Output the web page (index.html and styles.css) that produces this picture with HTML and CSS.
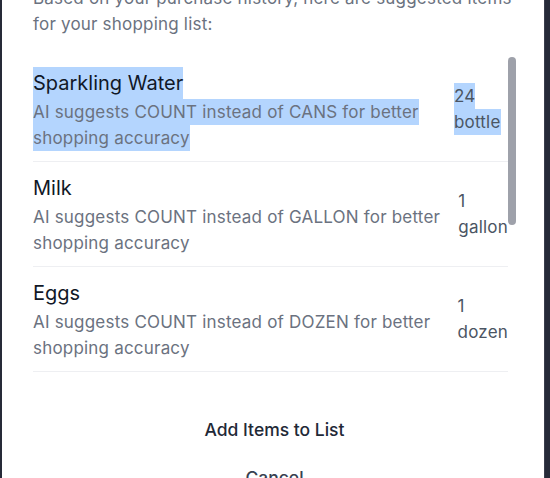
FILE: index.html
```html
<!DOCTYPE html>
<html lang="en">
<head>
<meta charset="utf-8">
<title>Suggested Items</title>
<link rel="stylesheet" href="styles.css">
</head>
<body>
<div class="modal">
  <p class="intro">Based on your purchase history, here are suggested items for your shopping list:</p>
  <div class="list-wrap">
    <div class="list">
      <div class="item">
        <div class="item-text">
          <div class="title"><span class="sel sel-title">Sparkling Water</span></div>
          <div class="desc"><span class="sel">AI suggests COUNT instead of CANS for better shopping accuracy</span></div>
        </div>
        <div class="qty"><span class="sel">24 bottle</span></div>
      </div>
      <div class="item">
        <div class="item-text">
          <div class="title">Milk</div>
          <div class="desc">AI suggests COUNT instead of GALLON for better shopping accuracy</div>
        </div>
        <div class="qty">1 gallon</div>
      </div>
      <div class="item">
        <div class="item-text">
          <div class="title">Eggs</div>
          <div class="desc">AI suggests COUNT instead of DOZEN for better shopping accuracy</div>
        </div>
        <div class="qty">1 dozen</div>
      </div>
      <div class="item">
        <div class="item-text">
          <div class="title">Bread</div>
          <div class="desc">AI suggests COUNT instead of LOAF for better shopping accuracy</div>
        </div>
        <div class="qty">2 loaf</div>
      </div>
      <div class="item">
        <div class="item-text">
          <div class="title">Bananas</div>
          <div class="desc">AI suggests COUNT instead of BUNCH for better shopping accuracy</div>
        </div>
        <div class="qty">1 bunch</div>
      </div>
    </div>
    <div class="scroll-thumb"></div>
  </div>
  <div class="actions">
    <button class="btn btn-primary" type="button">Add Items to List</button>
    <button class="btn btn-cancel" type="button">Cancel</button>
  </div>
</div>
</body>
</html>
```
FILE: styles.css
```css
html, body {
  margin: 0;
  padding: 0;
}
body {
  background: #262a38;
  height: 478px;
  overflow: hidden;
  font-family: Inter, "Noto Sans", "Liberation Sans", sans-serif;
}
.modal {
  margin-left: 2px;
  width: 543px;
  box-sizing: border-box;
  background: #ffffff;
  padding: 0 28px 40px 31px;
  border-right: 1px solid #3a3e4c;
}
.intro {
  margin: -15px 0 20px;
  font-size: 17px;
  letter-spacing: 0.2px;
  line-height: 26px;
  color: #6b7280;
}
.list-wrap {
  position: relative;
}
.list {
  height: 316px;
  overflow: hidden;
  padding-right: 8px;
}
.scroll-thumb {
  position: absolute;
  top: 0;
  right: 0;
  width: 8px;
  height: 168px;
  border-radius: 4px;
  background: #9ea1aa;
}
.item {
  display: flex;
  align-items: center;
  gap: 16px;
  padding: 10px 0;
  border-bottom: 1px solid #eeeff2;
}
.title {
  font-size: 20px;
  line-height: 32px;
  color: #111827;
}
.desc {
  font-size: 17px;
  letter-spacing: 0.2px;
  line-height: 26px;
  color: #6b7280;
}
.qty {
  font-size: 17px;
  letter-spacing: 0.2px;
  line-height: 26px;
  color: #4b5563;
}
.sel {
  background: #b4d5fe;
  padding: 2.7px 0;
}
.sel-title {
  padding: 3.9px 0;
}
.actions {
  margin-top: 33px;
  display: flex;
  flex-direction: column;
}
.btn {
  display: block;
  width: 100%;
  background: none;
  border: 0;
  padding: 12px;
  font-family: inherit;
  font-size: 17.5px;
  line-height: 24px;
  font-weight: 500;
  color: #1f2937;
}
.btn-cancel {
  color: #374151;
}
```
